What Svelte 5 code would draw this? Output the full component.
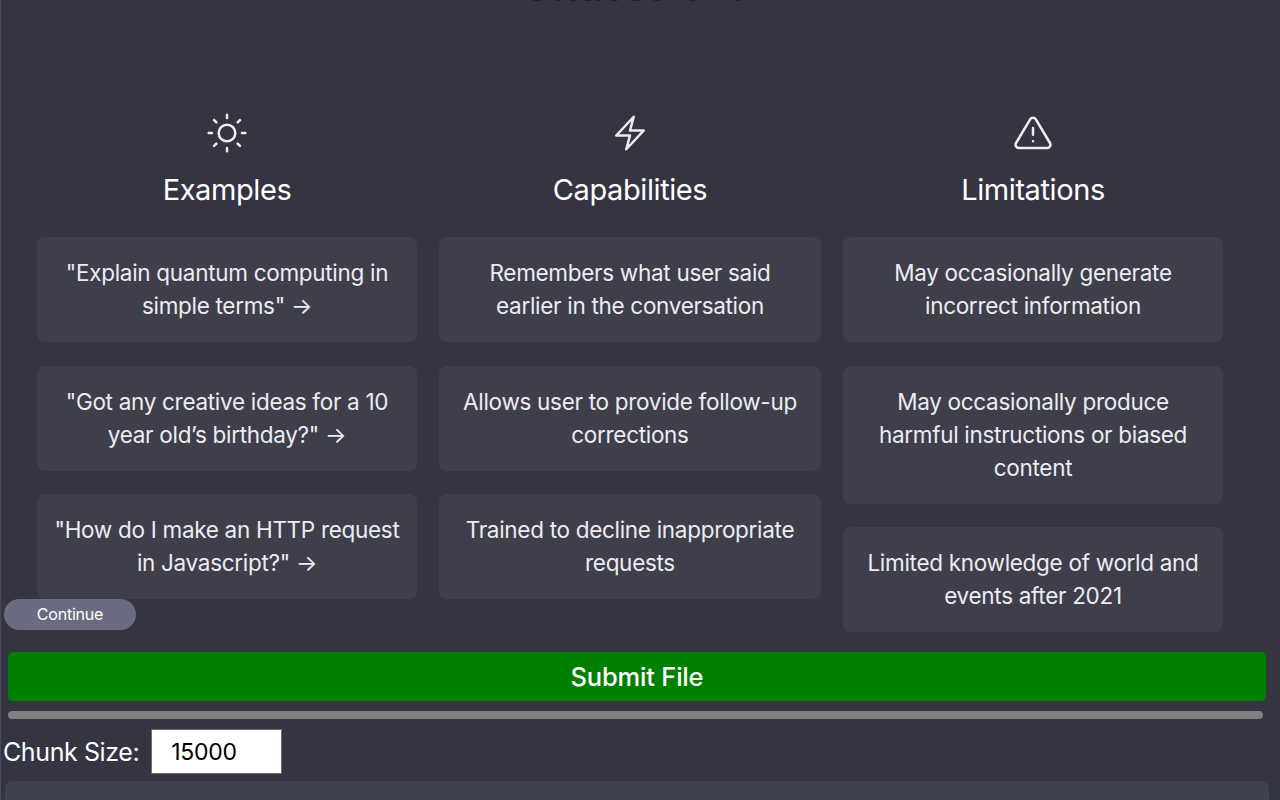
<script>
  const columns = [
    {
      title: 'Examples',
      icon: 'sun',
      items: [
        '"Explain quantum computing in simple terms" →',
        '"Got any creative ideas for a 10 year old’s birthday?" →',
        '"How do I make an HTTP request in Javascript?" →'
      ]
    },
    {
      title: 'Capabilities',
      icon: 'bolt',
      items: [
        'Remembers what user said earlier in the conversation',
        'Allows user to provide follow-up corrections',
        'Trained to decline inappropriate requests'
      ]
    },
    {
      title: 'Limitations',
      icon: 'warn',
      items: [
        'May occasionally generate incorrect information',
        'May occasionally produce harmful instructions or biased content',
        'Limited knowledge of world and events after 2021'
      ]
    }
  ];
</script>

<div class="page">
  <h1 class="heading">ChatGPT 4</h1>

  <section class="intro">
    <div class="columns">
      {#each columns as col}
        <div class="column">
          <svg class="icon" viewBox="0 0 24 24" fill="none" stroke="currentColor" stroke-width="1.5" stroke-linecap="round" stroke-linejoin="round">
            {#if col.icon === 'sun'}
              <circle cx="12" cy="12" r="5" />
              <path d="M12 1v2M12 21v2M4.22 4.22l1.42 1.42M18.36 18.36l1.42 1.42M1 12h2M21 12h2M4.22 19.78l1.42-1.42M18.36 5.64l1.42-1.42" />
            {:else if col.icon === 'bolt'}
              <path d="M3.75 13.5l10.5-11.25L12 10.5h8.25L9.75 21.75 12 13.5H3.75z" />
            {:else}
              <path d="M10.29 3.86 1.82 18a2 2 0 0 0 1.71 3h16.94a2 2 0 0 0 1.71-3L13.71 3.86a2 2 0 0 0-3.42 0z" />
              <path d="M12 9v4M12 17h.01" />
            {/if}
          </svg>
          <h2 class="title">{col.title}</h2>
          <ul class="cards">
            {#each col.items as item}
              <li class="card">{item}</li>
            {/each}
          </ul>
        </div>
      {/each}
    </div>
    <button class="continue">Continue</button>
  </section>

  <button class="submit">Submit File</button>
  <div class="progress"></div>

  <label class="chunk">
    <span>Chunk Size:</span>
    <input type="text" value="15000" />
  </label>

  <div class="output"></div>
</div>

<style>
  :global(body) {
    margin: 0;
    background: #343541;
    overflow: hidden;
  }

  .page {
    height: 800px;
    overflow: hidden;
    box-sizing: border-box;
    border-left: 1px solid #4a4b57;
    background: #343541;
    color: #ececf1;
    font-family: Inter, "Liberation Sans", sans-serif;
  }

  .heading {
    margin: -35px 0 0;
    height: 40px;
    line-height: 40px;
    text-align: center;
    font-size: 43px;
    font-weight: 600;
    color: #202123;
    padding-right: 14px;
  }

  .intro {
    position: relative;
    height: 647px;
  }

  .columns {
    display: grid;
    grid-template-columns: 380px 382px 380px;
    gap: 22px;
    padding: 108px 0 0 36px;
  }

  .column {
    display: flex;
    flex-direction: column;
    align-items: center;
  }

  .icon {
    width: 40px;
    height: 40px;
    margin-bottom: 20px;
  }

  .title {
    margin: 0 0 31px;
    font-size: 29px;
    line-height: 33px;
    font-weight: 400;
    letter-spacing: -0.4px;
    color: #fff;
  }

  .cards {
    list-style: none;
    margin: 0;
    padding: 0;
    width: 100%;
    display: flex;
    flex-direction: column;
    gap: 23.5px;
  }

  .card {
    background: #3e3f4b;
    border-radius: 8px;
    padding: 19px 16px 20px;
    font-size: 22.5px;
    line-height: 33px;
    letter-spacing: -0.3px;
    text-align: center;
    color: #ececf1;
  }

  .continue {
    position: absolute;
    left: 3px;
    top: 594px;
    width: 132px;
    height: 31px;
    border: none;
    border-radius: 16px;
    background: #6b6b7f;
    color: #fff;
    font-family: inherit;
    font-size: 16px;
    letter-spacing: -0.2px;
    padding: 0 0 2px;
  }

  .submit {
    display: block;
    margin: 0 0 0 7px;
    width: 1258px;
    height: 49px;
    border: none;
    border-radius: 5px;
    background: #008000;
    color: #fff;
    font-family: inherit;
    font-size: 25.5px;
    font-weight: 500;
    letter-spacing: -0.2px;
  }

  .progress {
    margin: 10px 0 0 7px;
    width: 1255px;
    height: 8px;
    border-radius: 4px;
    background: #808080;
  }

  .chunk {
    display: flex;
    align-items: center;
    gap: 12px;
    margin: 10px 0 0 2px;
    font-size: 25px;
    letter-spacing: -0.4px;
    color: #fff;
  }

  .chunk input {
    box-sizing: border-box;
    width: 131px;
    height: 45px;
    border: 1px solid #6b6b7f;
    background: #fff;
    color: #000;
    font-family: inherit;
    font-size: 23px;
    letter-spacing: -0.3px;
    padding: 0 0 0 19px;
    outline: none;
  }

  .output {
    margin: 7px 0 0 4px;
    width: 1264px;
    height: 60px;
    border-radius: 8px;
    background: #40414f;
  }
</style>
